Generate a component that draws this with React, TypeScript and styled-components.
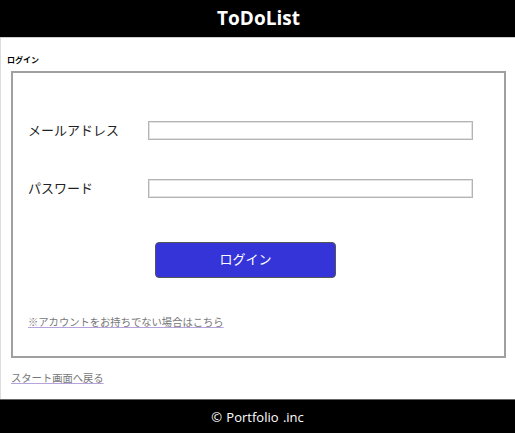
import styled, { createGlobalStyle } from "styled-components";

const GlobalStyle = createGlobalStyle`
  body {
    margin: 0;
    background: #fff;
    font-family: "Noto Sans CJK JP", "Open Sans", sans-serif;
  }
`;

const fields = [
  { label: "メールアドレス", type: "email" },
  { label: "パスワード", type: "password" },
];

const App: React.FC = () => {
  return (
    <>
      <GlobalStyle />
      <Header>
        <Logo>ToDoList</Logo>
      </Header>
      <Main>
        <PageTitle>ログイン</PageTitle>
        <LoginBox>
          {fields.map((field) => (
            <FieldRow key={field.label}>
              <Label>{field.label}</Label>
              <Input type={field.type} />
            </FieldRow>
          ))}
          <ButtonRow>
            <LoginButton>ログイン</LoginButton>
          </ButtonRow>
          <TextLink href="#">※アカウントをお持ちでない場合はこちら</TextLink>
        </LoginBox>
        <BackLink href="#">スタート画面へ戻る</BackLink>
      </Main>
      <Footer>
        <Copy>© Portfolio .inc</Copy>
      </Footer>
    </>
  );
};

export default App;

const Header = styled.header`
  height: 37px;
  background: #000;
  border-bottom: 1px solid #cfcfcf;
  display: flex;
  align-items: center;
  justify-content: center;
`;

const Logo = styled.h1`
  margin: 0 0 0 2px;
  color: #fff;
  font-family: "Open Sans", sans-serif;
  font-weight: 700;
  font-size: 19px;
  line-height: 1;
`;

const Main = styled.main`
  border-left: 1px solid #dcdcdc;
  padding: 16px 9px 14px 10px;
  display: flex;
  flex-direction: column;
  align-items: flex-start;
`;

const PageTitle = styled.h2`
  margin: 0 0 5px -4px;
  font-size: 8px;
  font-weight: 700;
  line-height: 12px;
  color: #000;
`;

const LoginBox = styled.section`
  align-self: stretch;
  border: 2px solid #a0a0a0;
  padding: 48px 31px 27px 15px;
  display: flex;
  flex-direction: column;
`;

const FieldRow = styled.div`
  display: grid;
  grid-template-columns: 120px 1fr;
  align-items: center;
  height: 19px;
  margin-bottom: 39px;

  &:nth-of-type(2) {
    margin-bottom: 44px;
  }
`;

const Label = styled.label`
  font-size: 13px;
  color: #222;
  line-height: 19px;
  margin-top: -2px;
`;

const Input = styled.input`
  box-sizing: border-box;
  width: 100%;
  height: 19px;
  margin: 0;
  border: 1px solid #b4b4b4;
  box-shadow: inset 0 0 0 1px #e2e2e2;
  background: #fff;
`;

const ButtonRow = styled.div`
  padding-left: 127px;
  margin-bottom: 37px;
`;

const LoginButton = styled.button`
  width: 181px;
  height: 36px;
  padding: 0 0 3px;
  background: #3434d8;
  border: 1px solid #555;
  border-radius: 4px;
  color: #fff;
  font-family: "Noto Sans CJK JP", sans-serif;
  font-size: 13px;
  cursor: pointer;
`;

const TextLink = styled.a`
  align-self: flex-start;
  font-size: 10.3px;
  line-height: 14px;
  color: #777;
  text-decoration: underline;
  text-decoration-color: #b7a3dc;
`;

const BackLink = styled(TextLink)`
  margin-top: 13px;
`;

const Footer = styled.footer`
  height: 33px;
  background: #000;
  border-top: 1px solid #666;
  display: flex;
  align-items: center;
  justify-content: center;
`;

const Copy = styled.small`
  color: #fff;
  font-family: "Open Sans", sans-serif;
  font-size: 13px;
  word-spacing: 1px;
`;
